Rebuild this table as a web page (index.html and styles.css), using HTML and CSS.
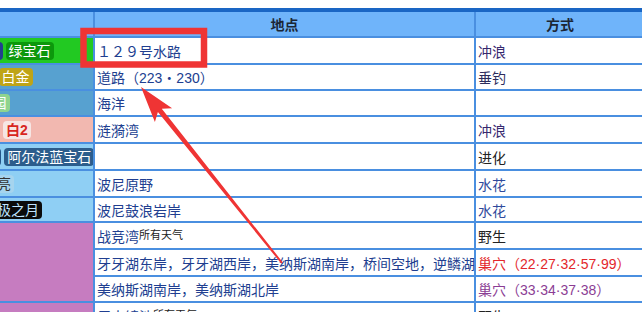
FILE: index.html
```html
<!DOCTYPE html>
<html lang="zh-CN">
<head>
<meta charset="utf-8">
<title>地点</title>
<link rel="stylesheet" href="styles.css">
</head>
<body>
<div class="page">
  <div class="clip">
    <div class="loc">
      <div class="th">版本</div>
      <div class="th">地点</div>
      <div class="th">方式</div>

      <div class="cell ver bg-emerald"><span class="tag t-ruby">红宝石</span><span class="tag t-sapphire">蓝宝石</span><span class="tag t-emerald">绿宝石</span></div>
      <div class="cell"><span class="link">１２９号水路</span></div>
      <div class="cell"><span class="m-visited">冲浪</span></div>

      <div class="cell ver bg-steel"><span class="tag t-diamond">钻石</span><span class="tag t-pearl">珍珠</span><span class="tag t-platinum">白金</span></div>
      <div class="cell"><span class="link">道路（223・230）</span></div>
      <div class="cell"><span class="m-dark">垂钓</span></div>

      <div class="cell ver bg-steel"><span class="tag t-park">自然公园</span></div>
      <div class="cell"><span class="link">海洋</span></div>
      <div class="cell"></div>

      <div class="cell ver bg-pink"><span class="tag t-black">黑</span><span class="tag t-white">白</span><span class="tag t-black2">黑2</span><span class="tag t-white2">白2</span></div>
      <div class="cell"><span class="link">涟漪湾</span></div>
      <div class="cell"><span class="m-visited">冲浪</span></div>

      <div class="cell ver bg-sky"><span class="tag wide t-x">X</span><span class="tag wide t-y">Y</span><span class="tag t-oruby">欧米伽红宝石</span><span class="tag t-asapphire">阿尔法蓝宝石</span></div>
      <div class="cell"></div>
      <div class="cell"><span class="m-plain">进化</span></div>

      <div class="cell ver bg-sky"><span class="tag t-sun">太阳</span><span class="tag t-moon">月亮</span></div>
      <div class="cell"><span class="link">波尼原野</span></div>
      <div class="cell"><span class="m-link">水花</span></div>

      <div class="cell ver bg-sky"><span class="tag t-usun">究极之日</span><span class="tag t-umoon">究极之月</span></div>
      <div class="cell"><span class="link">波尼鼓浪岩岸</span></div>
      <div class="cell"><span class="m-link">水花</span></div>

      <div class="cell ver bg-purple span3"></div>
      <div class="cell"><span class="link">战竞湾</span><sup class="weather">所有天气</sup></div>
      <div class="cell"><span class="m-plain">野生</span></div>

      <div class="cell"><span class="link">牙牙湖东岸，牙牙湖西岸，美纳斯湖南岸，桥间空地，逆鳞湖</span></div>
      <div class="cell"><span class="m-red">巢穴（22·27·32·57·99）</span></div>

      <div class="cell"><span class="link">美纳斯湖南岸，美纳斯湖北岸</span></div>
      <div class="cell"><span class="m-purple">巢穴（33·34·37·38）</span></div>

      <div class="cell ver bg-purple"></div>
      <div class="cell"><span class="link">巨人镜池</span><sup class="weather">所有天气</sup></div>
      <div class="cell"><span class="m-plain">野生</span></div>
    </div>
  </div>
</div>

<svg class="annot" width="642" height="312" viewBox="0 0 642 312" aria-hidden="true">
  <rect x="83.5" y="31" width="120.5" height="33.5" fill="none" stroke="#ef3434" stroke-width="6.5"/>
  <polygon fill="#ef3434" points="141,87 172.1,108.2 161.8,108.8 282.8,262.4 281.2,263.6 157.9,112 154.9,122"/>
</svg>
</body>
</html>
```

FILE: styles.css
```css
* {
  box-sizing: border-box;
  margin: 0;
  padding: 0;
}

html,
body {
  background: #fff;
}

body {
  position: relative;
  width: 642px;
  height: 312px;
  overflow: hidden;
  font-family: "Liberation Sans", "Noto Sans CJK SC", "Microsoft YaHei", sans-serif;
  font-size: 14px;
  color: #222;
}

.page {
  padding-top: 8px;
}

.clip {
  width: 642px;
  overflow: hidden;
}

.loc {
  display: grid;
  width: 780px;
  margin-left: -136px;
  grid-template-columns: 229px 379px 168px;
  grid-template-rows: 24px 25px 24px 24px 25px 25px 25px 23px 25px 25px 24px 25px;
  gap: 2px;
  background: #4a8fe0;
  border-top: 4px solid #1a66c4;
}

.th {
  display: flex;
  align-items: center;
  justify-content: center;
  background: #6fb4fa;
  font-weight: bold;
  color: #1b2636;
}

.cell {
  display: flex;
  align-items: center;
  padding: 0 0 0 2px;
  background: #fff;
  white-space: nowrap;
  overflow: hidden;
}

.ver {
  justify-content: center;
  gap: 3px;
  padding: 0;
}

.span3 {
  grid-row: span 3;
}

.bg-emerald { background: #22c922; }
.bg-steel { background: #57a1d0; }
.bg-pink { background: #f2b8b0; }
.bg-sky { background: #8fcff4; }
.bg-purple { background: #c67cc0; }

.tag {
  display: inline-block;
  height: 18px;
  padding: 0 3px;
  line-height: 18px;
  border-radius: 4px;
  color: #fff;
}

.tag.wide {
  padding: 0 6px;
}

.t-ruby { background: #c8281e; }
.t-sapphire { background: #23408e; }
.t-emerald { background: #0c980c; }
.t-diamond { background: #4f7fd0; }
.t-pearl { background: #c78aa8; }
.t-platinum { background: #bfa416; }
.t-park { background: #8fd48f; }
.t-black { background: #222; }
.t-white { background: #eee; color: #333; }
.t-black2 { background: #333; font-weight: bold; }
.t-white2 { background: #f6e6e4; color: #d8261e; font-weight: bold; }
.t-x { background: #1f5fb0; }
.t-y { background: #c03030; }
.t-oruby { background: #24558a; }
.t-asapphire { background: #2c5d8c; }
.t-sun { background: #e89a30; }
.t-moon { background: #a6d4ee; color: #333; }
.t-usun { background: #e06a20; }
.t-umoon { background: #0b0b0b; color: #bfe4ff; }

.link { color: #203e90; }
.m-visited { color: #37296e; }
.m-dark { color: #2c2c5c; }
.m-link { color: #2f4a9c; }
.m-plain { color: #222; }
.m-red { color: #e3262b; }
.m-purple { color: #8b3d94; }

.weather {
  font-size: 11px;
  line-height: 1;
  vertical-align: 11px;
  color: #222;
}

.annot {
  position: absolute;
  left: 0;
  top: 0;
  pointer-events: none;
}
```
